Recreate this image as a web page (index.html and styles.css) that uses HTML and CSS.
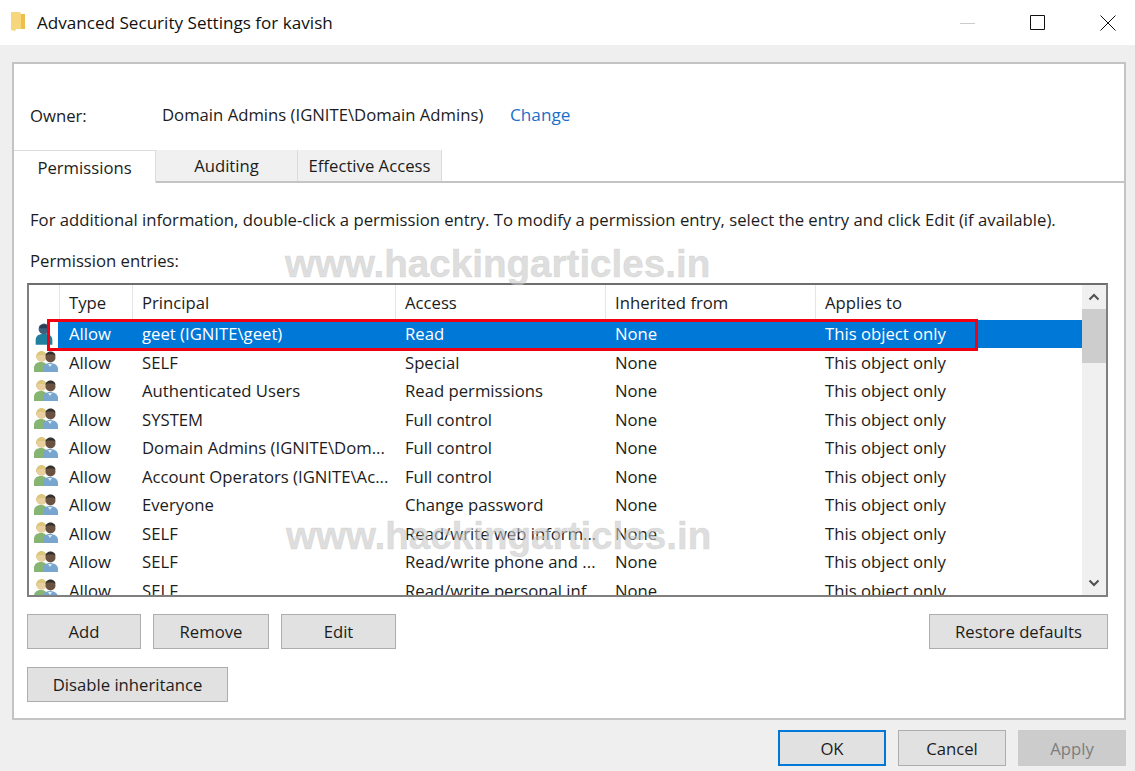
FILE: index.html
```html
<!DOCTYPE html>
<html lang="en">

<head>
    <meta charset="UTF-8">
    <title>Advanced Security Settings for kavish</title>
    <link rel="stylesheet" href="styles.css">
</head>

<body>
    <svg class="defs" width="0" height="0">
        <symbol id="group" viewBox="0 0 24 22">
            <circle cx="7.500" cy="6" r="5" fill="#e8cfa0" />
            <path d="M2 8c-.5-6 3-8 5.500-8s6 2 5.500 8l-2-4H4z" fill="#dcc67c" />
            <path d="M0 21v-4c0-4 3-6 7-6s6 2 6 6v4z" fill="#86b573" />
            <circle cx="16.500" cy="6.500" r="5" fill="#6a5243" />
            <path d="M11.500 5c0-3 2.500-4.500 5-4.500s5 1.500 5 4.500l-2-1.500h-6z" fill="#33302e" />
            <path d="M9 21v-3c0-4 3-6 7-6s8 2 8 6v3z" fill="#79a6cf" />
            <path d="M14 13l2 3 2-3z" fill="#e3eef7" />
        </symbol>
        <symbol id="single" viewBox="0 0 24 26">
            <circle cx="12" cy="7" r="6.500" fill="#3e5f7d" />
            <path d="M6 5c1-4 11-5 12 0l-2 1H8z" fill="#2a3f55" />
            <path d="M2 26v-6c0-5 4-7 10-7s10 2 10 7v6z" fill="#1f7f9f" />
        </symbol>
    </svg>

    <header class="titlebar">
        <svg class="folder" width="15" height="20" viewBox="0 0 15 20">
            <path d="M0 1h9l1 2h4v15H5l-1 2-4-1z" fill="#f6d77c" />
            <path d="M10 3h4v15h-4z" fill="#eebf4d" />
        </svg>
        <span class="title">Advanced Security Settings for kavish</span>
        <div class="winbtns">
            <svg width="16" height="16" viewBox="0 0 16 16"><path d="M0 8.500h15" stroke="#ccc" /></svg>
            <svg width="16" height="16" viewBox="0 0 16 16"><path d="M.5.500h14v14H.5z" fill="none" stroke="#111" /></svg>
            <svg width="16" height="16" viewBox="0 0 16 16"><path d="M.5.500l15 15M15.500.500l-15 15" stroke="#111" /></svg>
        </div>
    </header>

    <main class="panel">
        <div class="owner">
            <span class="owner-label">Owner:</span>
            <span class="owner-name">Domain Admins (IGNITE\Domain Admins)</span>
            <a class="change">Change</a>
        </div>

        <div class="tabs">
            <div class="tab active">Permissions</div>
            <div class="tab">Auditing</div>
            <div class="tab tab-last">Effective Access</div>
        </div>

        <div class="content">
            <p class="info">For additional information, double-click a permission entry. To modify a permission entry, select the entry and click Edit (if available).</p>
            <p class="entries-label">Permission entries:</p>

            <div class="list">
                <div class="rows">
                    <div class="row head">
                        <span></span><span>Type</span><span>Principal</span><span>Access</span><span>Inherited from</span><span>Applies to</span>
                    </div>
                    <div class="row selected">
                        <span class="ic"><svg width="20" height="26"><use href="#single" /></svg></span><span>Allow</span><span>geet (IGNITE\geet)</span><span>Read</span><span>None</span><span>This object only</span>
                    </div>
                    <div class="row">
                        <span class="ic"><svg width="24" height="22"><use href="#group" /></svg></span><span>Allow</span><span>SELF</span><span>Special</span><span>None</span><span>This object only</span>
                    </div>
                    <div class="row">
                        <span class="ic"><svg width="24" height="22"><use href="#group" /></svg></span><span>Allow</span><span>Authenticated Users</span><span>Read permissions</span><span>None</span><span>This object only</span>
                    </div>
                    <div class="row">
                        <span class="ic"><svg width="24" height="22"><use href="#group" /></svg></span><span>Allow</span><span>SYSTEM</span><span>Full control</span><span>None</span><span>This object only</span>
                    </div>
                    <div class="row">
                        <span class="ic"><svg width="24" height="22"><use href="#group" /></svg></span><span>Allow</span><span>Domain Admins (IGNITE\Dom...</span><span>Full control</span><span>None</span><span>This object only</span>
                    </div>
                    <div class="row">
                        <span class="ic"><svg width="24" height="22"><use href="#group" /></svg></span><span>Allow</span><span>Account Operators (IGNITE\Ac...</span><span>Full control</span><span>None</span><span>This object only</span>
                    </div>
                    <div class="row">
                        <span class="ic"><svg width="24" height="22"><use href="#group" /></svg></span><span>Allow</span><span>Everyone</span><span>Change password</span><span>None</span><span>This object only</span>
                    </div>
                    <div class="row">
                        <span class="ic"><svg width="24" height="22"><use href="#group" /></svg></span><span>Allow</span><span>SELF</span><span>Read/write web inform...</span><span>None</span><span>This object only</span>
                    </div>
                    <div class="row">
                        <span class="ic"><svg width="24" height="22"><use href="#group" /></svg></span><span>Allow</span><span>SELF</span><span>Read/write phone and ...</span><span>None</span><span>This object only</span>
                    </div>
                    <div class="row">
                        <span class="ic"><svg width="24" height="22"><use href="#group" /></svg></span><span>Allow</span><span>SELF</span><span>Read/write personal inf...</span><span>None</span><span>This object only</span>
                    </div>
                </div>
                <div class="scrollbar">
                    <svg width="12" height="8" viewBox="0 0 12 8"><path d="M1.500 6.500L6 2l4.500 4.500" fill="none" stroke="#505050" stroke-width="2" /></svg>
                    <div class="track"><div class="thumb"></div></div>
                    <svg width="12" height="8" viewBox="0 0 12 8"><path d="M1.500 1.500L6 6l4.500-4.500" fill="none" stroke="#505050" stroke-width="2" /></svg>
                </div>
                <div class="redbox"></div>
            </div>

            <div class="actions">
                <button class="btn btn-add">Add</button>
                <button class="btn btn-remove">Remove</button>
                <button class="btn btn-edit">Edit</button>
                <button class="btn btn-restore">Restore defaults</button>
            </div>
            <button class="btn btn-disable">Disable inheritance</button>
        </div>
    </main>

    <footer class="footer">
        <button class="btn btn-foot btn-ok">OK</button>
        <button class="btn btn-foot">Cancel</button>
        <button class="btn btn-foot btn-apply">Apply</button>
    </footer>

    <div class="mark mark-top">www.hackingarticles.in</div>
    <div class="mark mark-bottom">www.hackingarticles.in</div>
</body>

</html>
```

FILE: styles.css
```css
* {
    box-sizing: border-box;
    margin: 0;
    padding: 0;
}

body {
    width: 1135px;
    height: 771px;
    overflow: hidden;
    background-color: #efefef;
    color: #1c1c1c;
    font-family: "Open Sans", "Noto Sans", sans-serif;
    font-size: 16.7px;
    position: relative;
}

.defs {
    position: absolute;
}

.titlebar {
    height: 45px;
    background-color: #fff;
    display: flex;
    align-items: center;
    padding-left: 11px;
}

.folder {
    margin-right: 11px;
    margin-top: -4px;
}

.title {
    font-size: 17.1px;
    color: #111;
}

.winbtns {
    margin-left: auto;
    display: flex;
    gap: 54px;
    padding-right: 19px;
}

.panel {
    margin: 17px 9px 0 12px;
    height: 658px;
    background-color: #fff;
    border: 2px solid #c4c4c4;
}

.owner {
    display: flex;
    align-items: center;
    height: 86px;
    padding: 14px 0 0 16px;
}

.owner-label {
    width: 132px;
    padding-top: 2px;
}

.owner-name {
    width: 348px;
}

.change {
    color: #1a6fc9;
    font-size: 17.2px;
}

.tabs {
    display: flex;
    height: 33px;
    border-bottom: 2px solid #c4c4c4;
}

.tab {
    width: 142px;
    height: 31px;
    background-color: #f0f0f0;
    border-right: 1px solid #dcdcdc;
    display: flex;
    align-items: center;
    justify-content: center;
}

.tab.active {
    height: 33px;
    background-color: #fff;
    border-top: 1px solid #dcdcdc;
    border-right: 1px solid #dcdcdc;
    padding-top: 1px;
}

.tab-last {
    width: 144px;
}

.content {
    padding: 0 16px 0 13px;
}

.info {
    margin: 25px 0 0 3px;
    line-height: 24px;
    white-space: nowrap;
}

.entries-label {
    margin: 17px 0 0 3px;
    line-height: 24px;
}

.list {
    position: relative;
    margin-top: 10px;
    height: 314px;
    border: 2px solid #7f7f7f;
    border-top-color: #6e6e6e;
    display: flex;
    overflow: hidden;
}

.rows {
    flex: 1;
    overflow: hidden;
}

.row {
    display: grid;
    grid-template-columns: 30px 73px 263px 210px 210px 1fr;
    height: 28.5px;
    align-items: center;
    white-space: nowrap;
}

.row > span {
    padding-left: 10px;
}

.row > .ic {
    padding-left: 5px;
    display: flex;
    align-items: center;
    height: 28px;
}

.head {
    height: 34.5px;
}

.row.head > span {
    height: 34.5px;
    line-height: 35px;
    padding-left: 9px;
    border-left: 1px solid #e5e5e5;
}

.row.head > span:first-child {
    border-left: none;
}

.selected {
    background: linear-gradient(to right, #fff 29px, #0078d7 29px);
    color: #fff;
}

.scrollbar {
    width: 24px;
    background-color: #f0f0f0;
    display: flex;
    flex-direction: column;
    align-items: center;
}

.scrollbar svg {
    margin: 8px 0;
    flex: none;
}

.track {
    flex: 1;
    width: 100%;
}

.thumb {
    height: 54px;
    background-color: #cdcdcd;
}

.redbox {
    position: absolute;
    left: 18px;
    top: 34px;
    width: 931px;
    height: 32px;
    border: 3px solid #f00010;
}

.actions {
    display: flex;
    margin-top: 17px;
    gap: 12px;
}

.btn {
    height: 35px;
    background-color: #e1e1e1;
    border: 1px solid #adadad;
    font-family: inherit;
    font-size: 16.7px;
    color: #1c1c1c;
}

.btn-add {
    width: 114px;
}

.btn-remove {
    width: 116px;
}

.btn-edit {
    width: 115px;
}

.btn-restore {
    width: 179px;
    margin-left: auto;
}

.btn-disable {
    width: 201px;
    margin-top: 18px;
}

.footer {
    display: flex;
    justify-content: flex-end;
    gap: 12px;
    padding: 10px 9px 0 0;
}

.btn-foot {
    width: 108px;
    height: 36px;
}

.btn-ok {
    border: 2px solid #0078d7;
}

.btn-apply {
    background-color: #ccc;
    border-color: #ccc;
    color: #7d7d7d;
}

.mark {
    position: absolute;
    font-family: "Liberation Sans", sans-serif;
    font-weight: bold;
    font-size: 38.6px;
    line-height: 40px;
    color: rgba(200, 200, 200, .6);
    -webkit-text-stroke: .5px rgba(200, 200, 200, .6);
    white-space: nowrap;
}

.mark-top {
    left: 285px;
    top: 244px;
}

.mark-bottom {
    left: 286px;
    top: 516px;
}
```
